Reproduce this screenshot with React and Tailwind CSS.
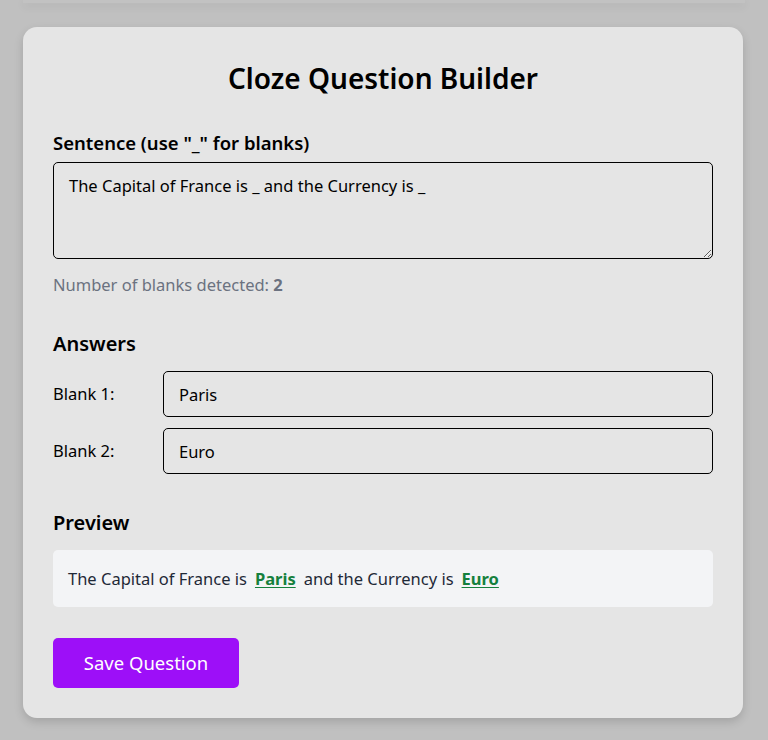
export default function App() {
  const font = { fontFamily: '"Noto Sans", "Open Sans", sans-serif' };
  return (
    <div className="min-h-[740px] bg-[#c0c0c0] overflow-hidden" style={font}>
      <div className="mx-[23px] h-[3px] bg-[#c2c2c2] shadow-[0_3px_8px_rgba(0,0,0,0.1)]" />
      <div className="mx-[23px] mt-[24px] w-[720px] rounded-[14px] bg-[#e5e5e5] px-[30px] pt-[33px] pb-[30px] shadow-[0_4px_10px_rgba(0,0,0,0.15)]">
        <h1 className="text-center text-[28px] leading-[36px] font-semibold text-black">Cloze Question Builder</h1>
        <div className="mt-[35px] text-[18.5px] leading-[24px] font-semibold text-black">Sentence (use "_" for blanks)</div>
        <textarea
          className="mt-[7px] block h-[97px] w-full rounded-[5px] border border-black bg-transparent px-[15px] py-[11px] text-[16.5px] leading-[24px] text-black outline-none"
          defaultValue="The Capital of France is _ and the Currency is _"
        />
        <div className="mt-[14px] text-[16.5px] leading-[24px] text-[#6b7280]">
          Number of blanks detected: <span className="font-bold">2</span>
        </div>
        <div className="mt-[33px] text-[20px] leading-[28px] font-semibold text-black">Answers</div>
        <div className="mt-[13px] flex flex-col gap-[11px]">
          {[
            ["Blank 1:", "Paris"],
            ["Blank 2:", "Euro"],
          ].map(([l, v]) => (
            <div key={l} className="flex items-center">
              <div className="w-[110px] text-[16.5px] text-black">{l}</div>
              <input
                className="h-[46px] flex-1 rounded-[5px] border border-black bg-transparent px-[15px] pt-[1px] text-[16.5px] text-black outline-none"
                defaultValue={v}
              />
            </div>
          ))}
        </div>
        <div className="mt-[35px] text-[20px] leading-[28px] font-semibold text-black">Preview</div>
        <div className="mt-[13px] flex h-[57px] items-center rounded-[5px] bg-[#f3f4f6] px-[15px] pt-[1px] text-[16.5px] text-[#1f2937]">
          <span>The Capital of France is</span>
          <span className="mx-[8px] font-bold text-[#15803d] underline underline-offset-2">Paris</span>
          <span>and the Currency is</span>
          <span className="mx-[8px] font-bold text-[#15803d] underline underline-offset-2">Euro</span>
        </div>
        <button className="mt-[31px] h-[50px] w-[186px] rounded-[5px] bg-[#9d0ff8] text-[18.5px] text-white">Save Question</button>
      </div>
    </div>
  );
}
